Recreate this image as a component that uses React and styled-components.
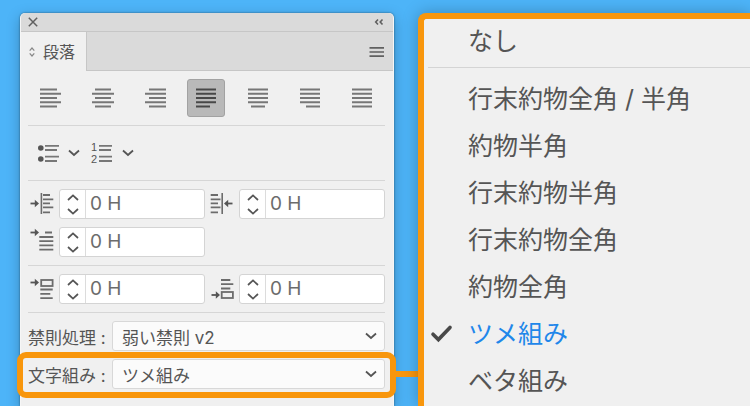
import React, { useState } from "react";
import styled, { createGlobalStyle, css } from "styled-components";

const ALIGNMENTS = [
  { id: "left", label: "左揃え", lines: [[0, 17], [0, 21], [0, 17], [0, 21], [0, 17]] },
  { id: "center", label: "中央揃え", lines: [[3, 19], [0, 22], [3, 19], [0, 22], [3, 19]] },
  { id: "right", label: "右揃え", lines: [[5, 22], [1, 22], [5, 22], [1, 22], [5, 22]] },
  { id: "justify-left", label: "均等配置(最終行左揃え)", lines: [[1, 21], [1, 21], [1, 21], [1, 21], [1, 15]] },
  { id: "justify-center", label: "均等配置(最終行中央揃え)", lines: [[1, 21], [1, 21], [1, 21], [1, 21], [4, 18]] },
  { id: "justify-right", label: "均等配置(最終行右揃え)", lines: [[1, 21], [1, 21], [1, 21], [1, 21], [7, 21]] },
  { id: "justify-all", label: "両端揃え", lines: [[1, 21], [1, 21], [1, 21], [1, 21], [1, 21]] },
];

const SPACINGS = [
  "行末約物全角 / 半角",
  "約物半角",
  "行末約物半角",
  "行末約物全角",
  "約物全角",
  "ツメ組み",
  "ベタ組み",
];

function App() {
  const [align, setAlign] = useState("justify-left");
  const [spacing, setSpacing] = useState("ツメ組み");

  return (
    <Page>
      <GlobalStyle />
      <Panel>
        <TitleBar>
          <PlainButton aria-label="閉じる">
            <Icon width="10" height="10" viewBox="0 0 10 10">
              <path d="M0.8 0.8L9.2 9.2M9.2 0.8L0.8 9.2" strokeWidth="1.5" />
            </Icon>
          </PlainButton>
          <PlainButton aria-label="折りたたむ">
            <Icon width="10" height="8" viewBox="0 0 10 8">
              <path d="M4 1.5L1.7 4L4 6.5M8.5 1.5L6.2 4L8.5 6.5" strokeWidth="1.6" />
            </Icon>
          </PlainButton>
        </TitleBar>
        <TabBar>
          <Tab>
            <Icon width="6" height="10" viewBox="0 0 6 10">
              <path d="M0.7 3.6L3 1L5.3 3.6M0.7 6.4L3 9L5.3 6.4" strokeWidth="1.2" />
            </Icon>
            段落
          </Tab>
          <PlainButton aria-label="メニュー">
            <Icon width="16" height="12" viewBox="0 0 16 12">
              <path d="M0.5 1.8H15M0.5 6H15M0.5 10.2H15" strokeWidth="1.7" />
            </Icon>
          </PlainButton>
        </TabBar>

        <Section>
          <AlignRow>
            {ALIGNMENTS.map(({ id, label, lines }) => (
              <AlignButton
                key={id}
                aria-label={label}
                aria-pressed={align === id}
                $active={align === id}
                onClick={() => setAlign(id)}
              >
                <Icon width="22" height="20" viewBox="0 0 22 20">
                  {lines.map(([from, to], i) => (
                    <path key={i} d={`M${from} ${1.5 + i * 4.25}H${to}`} strokeWidth="2" />
                  ))}
                </Icon>
              </AlignButton>
            ))}
          </AlignRow>
        </Section>

        <Section>
          <ListRow>
            <ListButton aria-label="箇条書き">
              <Icon width="22" height="20" viewBox="0 0 22 20">
                <circle cx="2.8" cy="5" r="2.8" fill="#555" stroke="none" />
                <circle cx="2.8" cy="16" r="2.8" fill="#555" stroke="none" />
                <path d="M7 2.8H21M7 7H19M7 13.7H21M7 18H19" strokeWidth="1.8" />
              </Icon>
              <Chevron />
            </ListButton>
            <ListButton aria-label="自動番号">
              <Icon width="22" height="20" viewBox="0 0 22 20">
                <IconDigit x="-1" y="8">1</IconDigit>
                <IconDigit x="-1" y="20">2</IconDigit>
                <path d="M7 2.8H20M7 7H19M7 13.7H20M7 18H20" strokeWidth="1.8" />
              </Icon>
              <Chevron />
            </ListButton>
          </ListRow>
        </Section>

        <Section>
          <FieldGrid>
            <Field id="indent-left" label="左インデント">
              <path d="M11.4 1V22" strokeWidth="1.6" />
              <path d="M13 3H20M13 7.3H23.3M13 11.4H20M13 15.4H23.3M13 20.3H20" strokeWidth="1.8" />
              <Arrow transform="translate(0 11.5)" />
            </Field>
            <Field id="indent-right" label="右インデント">
              <path d="M12.2 1V22" strokeWidth="1.6" />
              <path d="M0.7 3H8M0.7 7.3H10.5M0.7 11.4H8M0.7 15.4H10.5M0.7 20.3H8" strokeWidth="1.8" />
              <Arrow transform="translate(23 11.5) scale(-1 1)" />
            </Field>
            <Field id="indent-first" label="1行目左インデント">
              <path d="M15 2.5H22M9.3 7H23.3M9.3 11.2H23.3M9.3 15.4H23.3M9.3 19.6H23.3" strokeWidth="1.8" />
              <Arrow transform="translate(0 2.5)" />
            </Field>
          </FieldGrid>
        </Section>

        <Section>
          <FieldGrid>
            <Field id="space-before" label="段落前のアキ">
              <rect x="11.2" y="3" width="11.4" height="6" strokeWidth="1.8" />
              <path d="M10.3 12.5H22.7M10.3 16.8H20.3M10.3 21.1H22.7" strokeWidth="1.8" />
              <Arrow transform="translate(0 5.5)" />
            </Field>
            <Field id="space-after" label="段落後のアキ">
              <rect x="11.7" y="15" width="11.2" height="6" strokeWidth="1.8" />
              <path d="M11 3H20.3M11 7.2H23.3M11 11.5H20.3" strokeWidth="1.8" />
              <Arrow transform="translate(1 18)" />
            </Field>
          </FieldGrid>
        </Section>

        <Section $last>
          <SelectRow>
            <label htmlFor="kinsoku">禁則処理 :</label>
            <SelectBox>
              <select id="kinsoku" defaultValue="弱い禁則 v2">
                <option>弱い禁則 v2</option>
              </select>
              <Chevron />
            </SelectBox>
          </SelectRow>
          <SelectRow $highlight>
            <label htmlFor="mojikumi">文字組み :</label>
            <SelectBox>
              <select id="mojikumi" value={spacing} onChange={(e) => setSpacing(e.target.value)}>
                <option>なし</option>
                {SPACINGS.map((name) => (
                  <option key={name}>{name}</option>
                ))}
              </select>
              <Chevron />
            </SelectBox>
          </SelectRow>
        </Section>
      </Panel>

      <Menu>
        <MenuHead>
          <MenuItem $first onClick={() => setSpacing("なし")}>
            <CheckSlot>{spacing === "なし" && <Check />}</CheckSlot>
            なし
          </MenuItem>
        </MenuHead>
        {SPACINGS.map((name) => (
          <MenuItem key={name} $selected={spacing === name} onClick={() => setSpacing(name)}>
            <CheckSlot>{spacing === name && <Check />}</CheckSlot>
            {name}
          </MenuItem>
        ))}
      </Menu>
    </Page>
  );
}

function Field({ id, label, children }) {
  const [value, setValue] = useState(0);
  return (
    <>
      <label htmlFor={id} aria-label={label}>
        <Icon width="24" height="24" viewBox="0 0 24 24">
          {children}
        </Icon>
      </label>
      <Stepper>
        <StepButtons>
          <StepButton aria-label="増やす" onClick={() => setValue(value + 1)}>
            <Icon width="12" height="7" viewBox="0 0 12 7">
              <path d="M1 6L6 1.4L11 6" strokeWidth="1.7" />
            </Icon>
          </StepButton>
          <StepButton aria-label="減らす" onClick={() => setValue(value - 1)}>
            <Icon width="12" height="7" viewBox="0 0 12 7">
              <path d="M1 1L6 5.6L11 1" strokeWidth="1.7" />
            </Icon>
          </StepButton>
        </StepButtons>
        <StepInput id={id} value={`${value} H`} onChange={(e) => setValue(parseInt(e.target.value, 10) || 0)} />
      </Stepper>
    </>
  );
}

const Arrow = ({ transform }) => (
  <g transform={transform}>
    <path d="M0.5 0H6" stroke="#555" strokeWidth="1.8" />
    <path d="M4.8 -3.8L9 0L4.8 3.8Z" fill="#555" stroke="none" />
  </g>
);

const Chevron = () => (
  <Icon width="12" height="8" viewBox="0 0 12 8">
    <path d="M1 1.5L6 6L11 1.5" stroke="#555" strokeWidth="1.8" />
  </Icon>
);

const Check = () => (
  <Icon width="22" height="18" viewBox="0 0 22 18">
    <path d="M2 9.2L7.4 14.6L19 2.4" stroke="#484848" strokeWidth="3.6" strokeLinecap="round" />
  </Icon>
);

const GlobalStyle = createGlobalStyle`
  * {
    box-sizing: border-box;
  }

  body {
    margin: 0;
    background: #4db4f8;
    color: #555;
    font-family: Inter, "Noto Sans CJK JP", sans-serif;
    font-size: 17px;
  }

  button,
  input,
  select {
    margin: 0;
    padding: 0;
    border: 0;
    background: none;
    color: inherit;
    font: inherit;
  }
`;

const Page = styled.main`
  display: flex;
  gap: 24px;
  min-height: 100vh;
  padding: 13px 0 0 20px;
  overflow: hidden;
`;

const Icon = styled.svg`
  display: block;
  flex: none;
  fill: none;
  stroke: currentColor;
  overflow: visible;
`;

const IconDigit = styled.text`
  fill: #555;
  stroke: none;
  font-family: "Liberation Sans", sans-serif;
  font-size: 11px;
`;

const Panel = styled.section`
  flex: 0 1 374px;
  min-width: 0;
  border: 1px solid #f6f6f6;
  border-width: 0 1px;
  border-radius: 5px 5px 0 0;
  background: #f0f0f0;
  box-shadow: 0 0 2px rgba(0, 0, 0, 0.5), 0 4px 14px rgba(0, 0, 0, 0.25);
`;

const TitleBar = styled.header`
  display: flex;
  align-items: center;
  justify-content: space-between;
  height: 19px;
  padding: 0 9px 0 7px;
  border-bottom: 1px solid #c6c6c6;
  border-radius: 5px 5px 0 0;
  background: #dadada;
`;

const TabBar = styled.div`
  display: flex;
  justify-content: space-between;
  height: 39px;
  padding-right: 8px;
  background: #dadada;
  box-shadow: inset 0 -1px #c6c6c6;
`;

const Tab = styled.div`
  display: flex;
  align-items: center;
  gap: 8px;
  padding: 0 11px 0 8px;
  border-right: 1px solid #c6c6c6;
  background: #f0f0f0;
  font-size: 16px;
  line-height: 20px;

  svg {
    color: #888;
  }
`;

const PlainButton = styled.button`
  color: #606060;
`;

const Section = styled.div`
  margin: 0 8px 0 7px;
  padding: 8px 0;
  border-bottom: 1px solid ${(props) => (props.$last ? "transparent" : "#d6d6d6")};
`;

const AlignRow = styled.div`
  display: flex;
  justify-content: space-between;
  padding: 0 4px;
`;

const AlignButton = styled.button`
  display: flex;
  align-items: center;
  justify-content: center;
  width: 38px;
  height: 38px;
  border: 1px solid transparent;
  border-radius: 3px;
  color: #777;

  ${(props) =>
    props.$active &&
    css`
      border-color: #a2a2a2;
      background: #b9b9b9;
      color: #484848;
    `}
`;

const ListRow = styled.div`
  display: flex;
  align-items: center;
  gap: 12px;
  height: 38px;
  padding-left: 10px;
`;

const ListButton = styled.button`
  display: flex;
  align-items: center;
  gap: 8px;
  color: #777;
`;

const FieldGrid = styled.div`
  display: grid;
  grid-template-columns: 24px minmax(0, 1fr) 24px minmax(0, 1fr);
  align-items: center;
  gap: 8px 5px;
  padding-left: 2px;
  color: #6c6c6c;
`;

const Stepper = styled.div`
  display: flex;
  height: 30px;
  border: 1px solid #d4d4d4;
  border-radius: 3px;
  background: #fff;
`;

const StepButtons = styled.div`
  display: flex;
  flex-direction: column;
  flex: 0 0 26px;
  border-right: 1px solid #dcdcdc;
`;

const StepButton = styled.button`
  display: flex;
  flex: 1;
  align-items: center;
  justify-content: center;
  color: #555;
`;

const StepInput = styled.input`
  flex: 1;
  min-width: 0;
  padding: 0 0 2px 4px;
  font-size: 19px;
`;

const SelectRow = styled.div`
  position: relative;
  display: grid;
  grid-template-columns: 84px minmax(0, 1fr);
  align-items: center;
  height: 30px;

  label {
    white-space: nowrap;
  }

  & + & {
    margin-top: 8px;
  }

  /* orange ring and the line that leads to the open menu */
  ${(props) =>
    props.$highlight &&
    css`
      &::before {
        content: "";
        position: absolute;
        inset: -7px -11px -9px;
        border: 6px solid #f8960c;
        border-radius: 9px;
        pointer-events: none;
      }

      &::after {
        content: "";
        position: absolute;
        top: 12px;
        left: 100%;
        width: 28px;
        height: 6px;
        margin-left: 8px;
        background: #f8960c;
      }
    `}
`;

const SelectBox = styled.div`
  display: grid;
  align-items: center;
  height: 30px;
  border: 1px solid #d8d8d8;
  border-radius: 3px;
  background: #fbfbfb;

  select,
  svg {
    grid-area: 1 / 1;
  }

  select {
    width: 100%;
    height: 28px;
    padding: 3px 0 0 9px;
    appearance: none;
  }

  svg {
    justify-self: end;
    margin-right: 7px;
    pointer-events: none;
  }
`;

const Menu = styled.div`
  position: relative;
  flex: 1;
  min-width: 0;
  border: 6px solid #f8960c;
  border-width: 6px 0 0 6px;
  border-radius: 8px 0 0 0;
  background: #f0f0f0;
  box-shadow: 0 0 16px rgba(0, 0, 0, 0.25);
`;

const MenuHead = styled.div`
  margin-left: 4px;
  margin-bottom: 7px;
  padding-bottom: 4px;
  border-bottom: 1px solid #d4d4d4;

  button {
    margin-left: -4px;
  }
`;

const MenuItem = styled.button`
  display: flex;
  align-items: center;
  width: 100%;
  height: ${(props) => (props.$first ? "44px" : "47px")};
  color: ${(props) => (props.$selected ? "#1f87ea" : "#555")};
  font-size: 25px;
  line-height: 36px;
  text-align: left;
  white-space: nowrap;
`;

const CheckSlot = styled.span`
  flex: 0 0 44px;
  padding-left: 7px;
`;

export default App;
